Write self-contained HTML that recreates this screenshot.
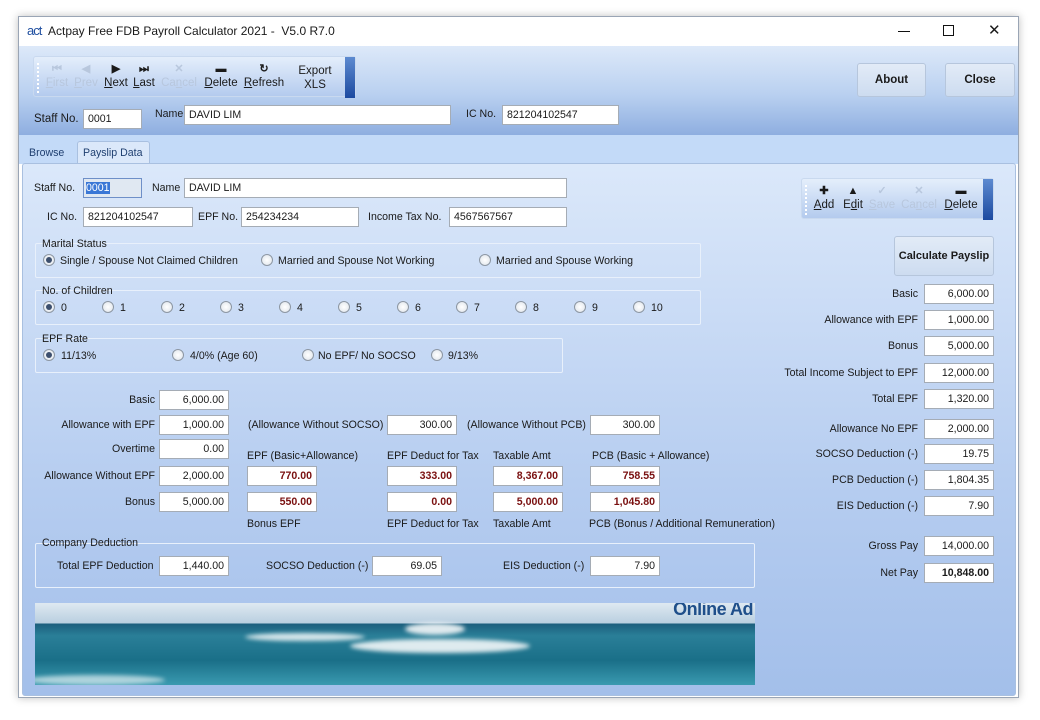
<!DOCTYPE html>
<html><head><meta charset="utf-8"><style>
*{box-sizing:border-box;margin:0;padding:0}
body{width:1040px;height:720px;background:#fff;font-family:"Liberation Sans",sans-serif;font-size:10.6px;color:#1a1a1a;position:relative;overflow:hidden}
.a{position:absolute;white-space:nowrap}
.win{position:absolute;left:18px;top:16px;width:1001px;height:682px;border:1px solid #9aa5b5;box-shadow:0 0 8px rgba(0,0,0,.25);background:#fff}
.hdr{left:19px;top:46px;width:999px;height:89px;background:linear-gradient(#dde9f9,#b9d0f0 55%,#8eaee0)}
.tabs{left:19px;top:135px;width:999px;height:29px;background:#c3daf8}
.pnl{left:22px;top:163px;width:994px;height:533px;background:linear-gradient(#dbe8fa,#b6cdf0 60%,#a3bfea);border:1px solid #a9c0e0;border-radius:3px}
.i{position:absolute;height:20px;background:#fff;border:1px solid #a5acb5;padding:0 4px;line-height:18px;font-size:10.6px;white-space:nowrap}
.r{text-align:right}
.red{color:#7a1010;font-weight:bold;text-align:right}
.gb{position:absolute;border:1px solid #e8f0fb;border-radius:2px}
.rd{position:absolute;width:12px;height:12px;border-radius:50%;border:1px solid #8d97a3;background:radial-gradient(#fff,#dde3ea)}
.rd.on::after{content:"";position:absolute;left:2px;top:2px;width:6px;height:6px;border-radius:50%;background:#3c4f6e}
.lr{position:absolute;text-align:right;white-space:nowrap}
.btn{position:absolute;border:1px solid #b6c6dc;border-radius:3px;background:linear-gradient(#e2ebf7,#cddcf0);font-weight:bold;text-align:center;font-size:11.5px}
.tb{position:absolute;height:41px;border-radius:3px;background:linear-gradient(#e4eefb,#b4cbee);border:1px solid #c9d9ef}
.tb .grip{position:absolute;left:3px;top:6px;width:2px;height:30px;border-left:2px dotted #fff}
.tb .end{position:absolute;right:0;top:0;width:10px;height:41px;background:linear-gradient(#5d8ad0,#1c4aa0)}
.ti{position:absolute;text-align:center;font-size:11.5px;line-height:15px}
.ti b{display:block;height:14px;font-size:11px}
.dis{color:#b8c7dd}
u{text-decoration:underline}
</style></head><body>
<div class="win"></div>
<div class="a" style="left:27px;top:23px;color:#1f4fa0;font-size:13px;letter-spacing:-1px">act</div>
<div class="a" style="left:48px;top:24px;font-size:12px">Actpay Free FDB Payroll Calculator 2021 -&nbsp; V5.0 R7.0</div>
<div class="a" style="left:898px;top:31px;width:12px;height:1px;background:#111"></div>
<div class="a" style="left:943px;top:25px;width:11px;height:11px;border:1px solid #111"></div>
<div class="a" style="left:988px;top:21px;font-size:15px">&#10005;</div>

<div class="a hdr"></div>
<div class="tb" style="left:33px;top:56px;width:323px"><div class="grip"></div><div class="end"></div>
<div class="ti dis" style="left:9px;top:5px;width:28px"><b>⏮</b><u>F</u>irst</div>
<div class="ti dis" style="left:38px;top:5px;width:28px"><b>◀</b><u>P</u>rev</div>
<div class="ti" style="left:67px;top:5px;width:30px"><b>▶</b><u>N</u>ext</div>
<div class="ti" style="left:96px;top:5px;width:28px"><b>⏭</b><u>L</u>ast</div>
<div class="ti dis" style="left:125px;top:5px;width:40px"><b>✕</b>Ca<u>n</u>cel</div>
<div class="ti" style="left:166px;top:5px;width:42px"><b>▬</b><u>D</u>elete</div>
<div class="ti" style="left:207px;top:5px;width:46px"><b>↻</b><u>R</u>efresh</div>
<div class="ti" style="left:257px;top:7px;width:48px;line-height:14px">Export<br>XLS</div>
</div>
<div class="btn" style="left:857px;top:63px;width:69px;height:34px;line-height:32px">About</div>
<div class="btn" style="left:945px;top:63px;width:70px;height:34px;line-height:32px">Close</div>
<div class="a" style="left:34px;top:113px;font-size:11.5px">Staff No.</div>
<div class="i" style="left:83px;top:109px;width:59px">0001</div>
<div class="a" style="left:155px;top:108px">Name</div>
<div class="i" style="left:184px;top:105px;width:267px">DAVID LIM</div>
<div class="a" style="left:466px;top:108px">IC No.</div>
<div class="i" style="left:502px;top:105px;width:117px">821204102547</div>

<div class="a tabs"></div>
<div class="a" style="left:29px;top:147px;color:#1f3f70">Browse</div>
<div class="a" style="left:77px;top:141px;width:73px;height:23px;background:#dbe8fa;border:1px solid #a9c0e0;border-bottom:none;border-radius:3px 3px 0 0;padding:5px 0 0 5px;color:#1f3f70">Payslip Data</div>
<div class="a pnl"></div>

<div class="a" style="left:34px;top:182px">Staff No.</div>
<div class="i" style="left:83px;top:178px;width:59px;background:#e0e8f2;border-color:#6e8fc8;padding-left:2px"><span style="background:#3a77d6;color:#fff">0001</span></div>
<div class="a" style="left:152px;top:182px">Name</div>
<div class="i" style="left:184px;top:178px;width:383px">DAVID LIM</div>
<div class="a" style="left:47px;top:211px">IC No.</div>
<div class="i" style="left:83px;top:207px;width:110px">821204102547</div>
<div class="a" style="left:198px;top:211px">EPF No.</div>
<div class="i" style="left:241px;top:207px;width:118px">254234234</div>
<div class="a" style="left:368px;top:211px">Income Tax No.</div>
<div class="i" style="left:449px;top:207px;width:118px">4567567567</div>

<div class="gb" style="left:35px;top:243px;width:666px;height:35px"></div>
<div class="a" style="left:42px;top:238px">Marital Status</div>
<div class="rd on" style="left:43px;top:254px"></div><div class="a" style="left:60px;top:255px">Single / Spouse Not Claimed Children</div>
<div class="rd" style="left:261px;top:254px"></div><div class="a" style="left:278px;top:255px">Married and Spouse Not Working</div>
<div class="rd" style="left:479px;top:254px"></div><div class="a" style="left:496px;top:255px">Married and Spouse Working</div>

<div class="gb" style="left:35px;top:290px;width:666px;height:35px"></div>
<div class="a" style="left:42px;top:285px">No. of Children</div>
<div class="rd on" style="left:43px;top:301px"></div><div class="a" style="left:61px;top:302px">0</div>
<div class="rd" style="left:102px;top:301px"></div><div class="a" style="left:120px;top:302px">1</div>
<div class="rd" style="left:161px;top:301px"></div><div class="a" style="left:179px;top:302px">2</div>
<div class="rd" style="left:220px;top:301px"></div><div class="a" style="left:238px;top:302px">3</div>
<div class="rd" style="left:279px;top:301px"></div><div class="a" style="left:297px;top:302px">4</div>
<div class="rd" style="left:338px;top:301px"></div><div class="a" style="left:356px;top:302px">5</div>
<div class="rd" style="left:397px;top:301px"></div><div class="a" style="left:415px;top:302px">6</div>
<div class="rd" style="left:456px;top:301px"></div><div class="a" style="left:474px;top:302px">7</div>
<div class="rd" style="left:515px;top:301px"></div><div class="a" style="left:533px;top:302px">8</div>
<div class="rd" style="left:574px;top:301px"></div><div class="a" style="left:592px;top:302px">9</div>
<div class="rd" style="left:633px;top:301px"></div><div class="a" style="left:651px;top:302px">10</div>

<div class="gb" style="left:35px;top:338px;width:528px;height:35px"></div>
<div class="a" style="left:42px;top:333px">EPF Rate</div>
<div class="rd on" style="left:43px;top:349px"></div><div class="a" style="left:61px;top:350px">11/13%</div>
<div class="rd" style="left:172px;top:349px"></div><div class="a" style="left:190px;top:350px">4/0% (Age 60)</div>
<div class="rd" style="left:302px;top:349px"></div><div class="a" style="left:318px;top:350px">No EPF/ No SOCSO</div>
<div class="rd" style="left:431px;top:349px"></div><div class="a" style="left:448px;top:350px">9/13%</div>

<div class="lr" style="right:885px;top:394px">Basic</div><div class="i r" style="left:159px;top:390px;width:70px">6,000.00</div>
<div class="lr" style="right:885px;top:419px">Allowance with EPF</div><div class="i r" style="left:159px;top:415px;width:70px">1,000.00</div>
<div class="lr" style="right:885px;top:443px">Overtime</div><div class="i r" style="left:159px;top:439px;width:70px">0.00</div>
<div class="lr" style="right:885px;top:470px">Allowance Without EPF</div><div class="i r" style="left:159px;top:466px;width:70px">2,000.00</div>
<div class="lr" style="right:885px;top:496px">Bonus</div><div class="i r" style="left:159px;top:492px;width:70px">5,000.00</div>

<div class="a" style="left:248px;top:419px">(Allowance Without SOCSO)</div><div class="i r" style="left:387px;top:415px;width:70px">300.00</div>
<div class="a" style="left:467px;top:419px">(Allowance Without PCB)</div><div class="i r" style="left:590px;top:415px;width:70px">300.00</div>

<div class="a" style="left:247px;top:450px">EPF (Basic+Allowance)</div>
<div class="a" style="left:387px;top:450px">EPF Deduct for Tax</div>
<div class="a" style="left:493px;top:450px">Taxable Amt</div>
<div class="a" style="left:592px;top:450px">PCB (Basic + Allowance)</div>
<div class="i red" style="left:247px;top:466px;width:70px">770.00</div>
<div class="i red" style="left:387px;top:466px;width:70px">333.00</div>
<div class="i red" style="left:493px;top:466px;width:70px">8,367.00</div>
<div class="i red" style="left:590px;top:466px;width:70px">758.55</div>
<div class="i red" style="left:247px;top:492px;width:70px">550.00</div>
<div class="i red" style="left:387px;top:492px;width:70px">0.00</div>
<div class="i red" style="left:493px;top:492px;width:70px">5,000.00</div>
<div class="i red" style="left:590px;top:492px;width:70px">1,045.80</div>
<div class="a" style="left:247px;top:518px">Bonus EPF</div>
<div class="a" style="left:387px;top:518px">EPF Deduct for Tax</div>
<div class="a" style="left:493px;top:518px">Taxable Amt</div>
<div class="a" style="left:589px;top:518px">PCB (Bonus / Additional Remuneration)</div>

<div class="gb" style="left:35px;top:543px;width:720px;height:45px"></div>
<div class="a" style="left:42px;top:537px">Company Deduction</div>
<div class="a" style="left:57px;top:560px">Total EPF Deduction</div><div class="i r" style="left:159px;top:556px;width:70px">1,440.00</div>
<div class="a" style="left:266px;top:560px">SOCSO Deduction (-)</div><div class="i r" style="left:372px;top:556px;width:70px">69.05</div>
<div class="a" style="left:503px;top:560px">EIS Deduction (-)</div><div class="i r" style="left:590px;top:556px;width:70px">7.90</div>

<div class="a" style="left:35px;top:603px;width:720px;height:82px;background:linear-gradient(#dfe9f1 0,#b9cfe0 20px,#1c5f7e 21px,#2a7f98 40%,#1a6f88 70%,#3a9ab0 100%);overflow:hidden">
<div class="a" style="left:315px;top:36px;width:180px;height:14px;border-radius:50%;background:rgba(255,255,255,.85);filter:blur(2px)"></div>
<div class="a" style="left:210px;top:30px;width:120px;height:8px;border-radius:50%;background:rgba(255,255,255,.8);filter:blur(2px)"></div>
<div class="a" style="left:370px;top:20px;width:60px;height:12px;border-radius:50%;background:rgba(255,255,255,.85);filter:blur(2px)"></div>
<div class="a" style="left:-10px;top:72px;width:140px;height:10px;border-radius:50%;background:rgba(255,255,255,.6);filter:blur(2px)"></div>
<div class="a" style="right:2px;top:-4px;font-size:18px;font-weight:bold;color:#1f4f8a;letter-spacing:-0.5px">Online Ad</div>
</div>

<div class="tb" style="left:801px;top:178px;width:193px"><div class="grip"></div><div class="end"></div>
<div class="ti" style="left:8px;top:5px;width:28px"><b>✚</b><u>A</u>dd</div>
<div class="ti" style="left:37px;top:5px;width:28px"><b>▲</b>E<u>d</u>it</div>
<div class="ti dis" style="left:66px;top:5px;width:28px"><b>✓</b><u>S</u>ave</div>
<div class="ti dis" style="left:97px;top:5px;width:40px"><b>✕</b>Ca<u>n</u>cel</div>
<div class="ti" style="left:138px;top:5px;width:42px"><b>▬</b><u>D</u>elete</div>
</div>
<div class="btn" style="left:894px;top:236px;width:100px;height:40px;line-height:38px;font-size:11px">Calculate Payslip</div>

<div class="lr" style="right:122px;top:288px">Basic</div><div class="i r" style="left:924px;top:284px;width:70px">6,000.00</div>
<div class="lr" style="right:122px;top:314px">Allowance with EPF</div><div class="i r" style="left:924px;top:310px;width:70px">1,000.00</div>
<div class="lr" style="right:122px;top:340px">Bonus</div><div class="i r" style="left:924px;top:336px;width:70px">5,000.00</div>
<div class="lr" style="right:122px;top:367px">Total Income Subject to EPF</div><div class="i r" style="left:924px;top:363px;width:70px">12,000.00</div>
<div class="lr" style="right:122px;top:393px">Total EPF</div><div class="i r" style="left:924px;top:389px;width:70px">1,320.00</div>
<div class="lr" style="right:122px;top:423px">Allowance No EPF</div><div class="i r" style="left:924px;top:419px;width:70px">2,000.00</div>
<div class="lr" style="right:122px;top:448px">SOCSO Deduction (-)</div><div class="i r" style="left:924px;top:444px;width:70px">19.75</div>
<div class="lr" style="right:122px;top:474px">PCB Deduction (-)</div><div class="i r" style="left:924px;top:470px;width:70px">1,804.35</div>
<div class="lr" style="right:122px;top:500px">EIS Deduction (-)</div><div class="i r" style="left:924px;top:496px;width:70px">7.90</div>
<div class="lr" style="right:122px;top:540px">Gross Pay</div><div class="i r" style="left:924px;top:536px;width:70px">14,000.00</div>
<div class="lr" style="right:122px;top:567px">Net Pay</div><div class="i r" style="left:924px;top:563px;width:70px;font-weight:bold">10,848.00</div>
</body></html>
